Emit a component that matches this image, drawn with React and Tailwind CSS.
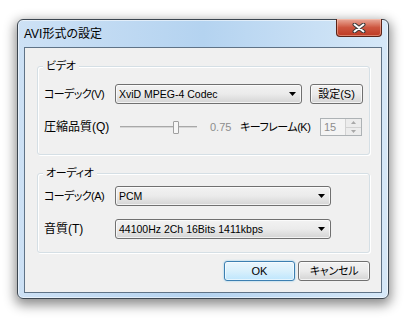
import React from "react";

const Arrow = () => (
  <svg width="7" height="4" viewBox="0 0 7 4">
    <path d="M0 0h7L3.5 4z" fill="#000" />
  </svg>
);

// Win7 style combobox (drop down list)
const Combo = ({ value, width }) => (
  <div
    className={`${width} h-[20px] flex items-center justify-between pl-[3px] pr-[5px] rounded-[3px] border border-[#707070] bg-linear-to-b from-[#f2f2f2] via-[#ebebeb] to-[#d4d4d4] shadow-[inset_0_0_0_1px_rgba(255,255,255,0.7)]`}
  >
    <span className="text-[10.5px] leading-none text-black whitespace-nowrap">{value}</span>
    <Arrow />
  </div>
);

const GroupBox = ({ title, height, children }) => (
  <div
    className={`${height} border border-[#d5dfe5] rounded-[3px] shadow-[inset_1px_1px_0_#fff,1px_1px_0_#fff] flex flex-col pl-[6px]`}
  >
    <div className="-mt-[8px] ml-[-1px] px-[3px] w-fit bg-[#f0f0f0] leading-[14px] text-[11px] tracking-[-0.3px]">{title}</div>
    {children}
  </div>
);

const Label = ({ children, size = "text-[11px] tracking-[-0.6px]" }) => (
  <div className={`w-[71px] ${size} leading-none whitespace-nowrap`}>{children}</div>
);

export default function App() {
  return (
    <div className="w-[414px] h-[323px] bg-white pt-[19px] pl-[17px] font-[family-name:'Liberation_Sans','Noto_Sans_CJK_JP',sans-serif] [font-feature-settings:'palt'] text-black">
      {/* window frame */}
      <div className="w-[372px] h-[280px] rounded-[6px] border border-[#3c4650] bg-linear-to-r from-[#cde1f5] via-[#b4d3f0] to-[#d6e8f8] shadow-[0_4px_12px_2px_rgba(0,0,0,0.45),inset_0_0_0_1px_rgba(255,255,255,0.55)] flex flex-col px-[6px]">
        {/* title bar */}
        <div className="h-[27px] flex justify-between">
          <div className="self-center pt-[1px] text-[12px] leading-none">AVI形式の設定</div>
          <div className="w-[46px] h-[18px] -mt-[1px] rounded-b-[4px] border border-t-0 border-[#5a2318] bg-linear-to-b from-[#e9aa9b] via-[#cd5640] to-[#bd3a24] shadow-[inset_0_0_0_1px_rgba(255,210,190,0.45)] flex items-center justify-center">
            <svg width="14" height="10" viewBox="0 0 14 10">
              <path d="M2.5 1.5l9 7M11.5 1.5l-9 7" stroke="#3a3a3a" strokeWidth="4" strokeLinecap="round" />
              <path d="M2.5 1.5l9 7M11.5 1.5l-9 7" stroke="#fff" strokeWidth="2" strokeLinecap="round" />
            </svg>
          </div>
        </div>

        {/* client area */}
        <div className="h-[246px] border border-[#5f7387] bg-[#f0f0f0] pl-[12px] pr-[11px] pt-[18px] flex flex-col">
          {/* video */}
          <GroupBox title="ビデオ" height="h-[89px]">
            <div className="mt-[11px] h-[20px] flex items-center">
              <Label>コーデック(V)</Label>
              <Combo value="XviD MPEG-4 Codec" width="w-[187px]" />
              <div className="ml-[8px] w-[53px] h-[20px] rounded-[3px] border border-[#707070] bg-linear-to-b from-[#f2f2f2] via-[#ebebeb] to-[#d4d4d4] shadow-[inset_0_0_0_1px_rgba(255,255,255,0.7)] flex items-center justify-center text-[11px] leading-none">
                設定(S)
              </div>
            </div>
            <div className="mt-[14px] h-[18px] flex items-center">
              <Label size="text-[12px]">圧縮品質(Q)</Label>
              {/* slider (disabled) */}
              <div className="w-[87px] px-[5px] flex items-center">
                <div className="w-[53px] h-[2px] bg-[#d6d6d6] border-t border-[#a8a8a8]"></div>
                <div className="w-[6px] h-[13px] rounded-[1px] border border-[#a0a0a0] bg-[#f7f7f7]"></div>
                <div className="flex-1 h-[2px] bg-[#d6d6d6] border-t border-[#a8a8a8]"></div>
              </div>
              <div className="ml-[8px] w-[30px] text-[11px] leading-none text-[#8d8d8d]">0.75</div>
              <div className="w-[80px] text-[11px] tracking-[-0.5px] leading-none whitespace-nowrap">キーフレーム(K)</div>
              <div className="w-[42px] h-[18px] border border-[#adb2b5] bg-[#f4f4f4] flex">
                <div className="flex-1 pl-[3px] text-[11px] leading-[16px] text-[#8d8d8d]">15</div>
                <div className="w-[16px] flex flex-col border-l border-[#d2d2d2]">
                  <div className="flex-1 flex items-center justify-center border-b border-[#d2d2d2] bg-[#ececec]">
                    <svg width="5" height="3" viewBox="0 0 5 3">
                      <path d="M0 3h5L2.5 0z" fill="#a8a8a8" />
                    </svg>
                  </div>
                  <div className="flex-1 flex items-center justify-center bg-[#ececec]">
                    <svg width="5" height="3" viewBox="0 0 5 3">
                      <path d="M0 0h5L2.5 3z" fill="#a8a8a8" />
                    </svg>
                  </div>
                </div>
              </div>
            </div>
          </GroupBox>

          {/* audio */}
          <div className="mt-[18px]">
            <GroupBox title="オーディオ" height="h-[80px]">
              <div className="mt-[6px] h-[20px] flex items-center">
                <Label>コーデック(A)</Label>
                <Combo value="PCM" width="w-[216px]" />
              </div>
              <div className="mt-[13px] h-[20px] flex items-center">
                <Label size="text-[12px]">音質(T)</Label>
                <Combo value="44100Hz 2Ch 16Bits 1411kbps" width="w-[216px]" />
              </div>
            </GroupBox>
          </div>

          {/* buttons */}
          <div className="mt-[8px] flex justify-end gap-[3px]">
            <div className="w-[71px] h-[20px] rounded-[3px] border border-[#3c7fb1] bg-linear-to-b from-[#eaf6fd] via-[#d9f0fc] to-[#bee6fd] shadow-[inset_0_0_0_1px_rgba(255,255,255,0.6),0_0_2px_#7fc4ea] flex items-center justify-center text-[11px] leading-none">
              OK
            </div>
            <div className="w-[72px] h-[20px] rounded-[3px] border border-[#707070] bg-linear-to-b from-[#f2f2f2] via-[#ebebeb] to-[#d4d4d4] shadow-[inset_0_0_0_1px_rgba(255,255,255,0.7)] flex items-center justify-center text-[11px] tracking-[-0.3px] leading-none">
              キャンセル
            </div>
          </div>
        </div>
      </div>
    </div>
  );
}
